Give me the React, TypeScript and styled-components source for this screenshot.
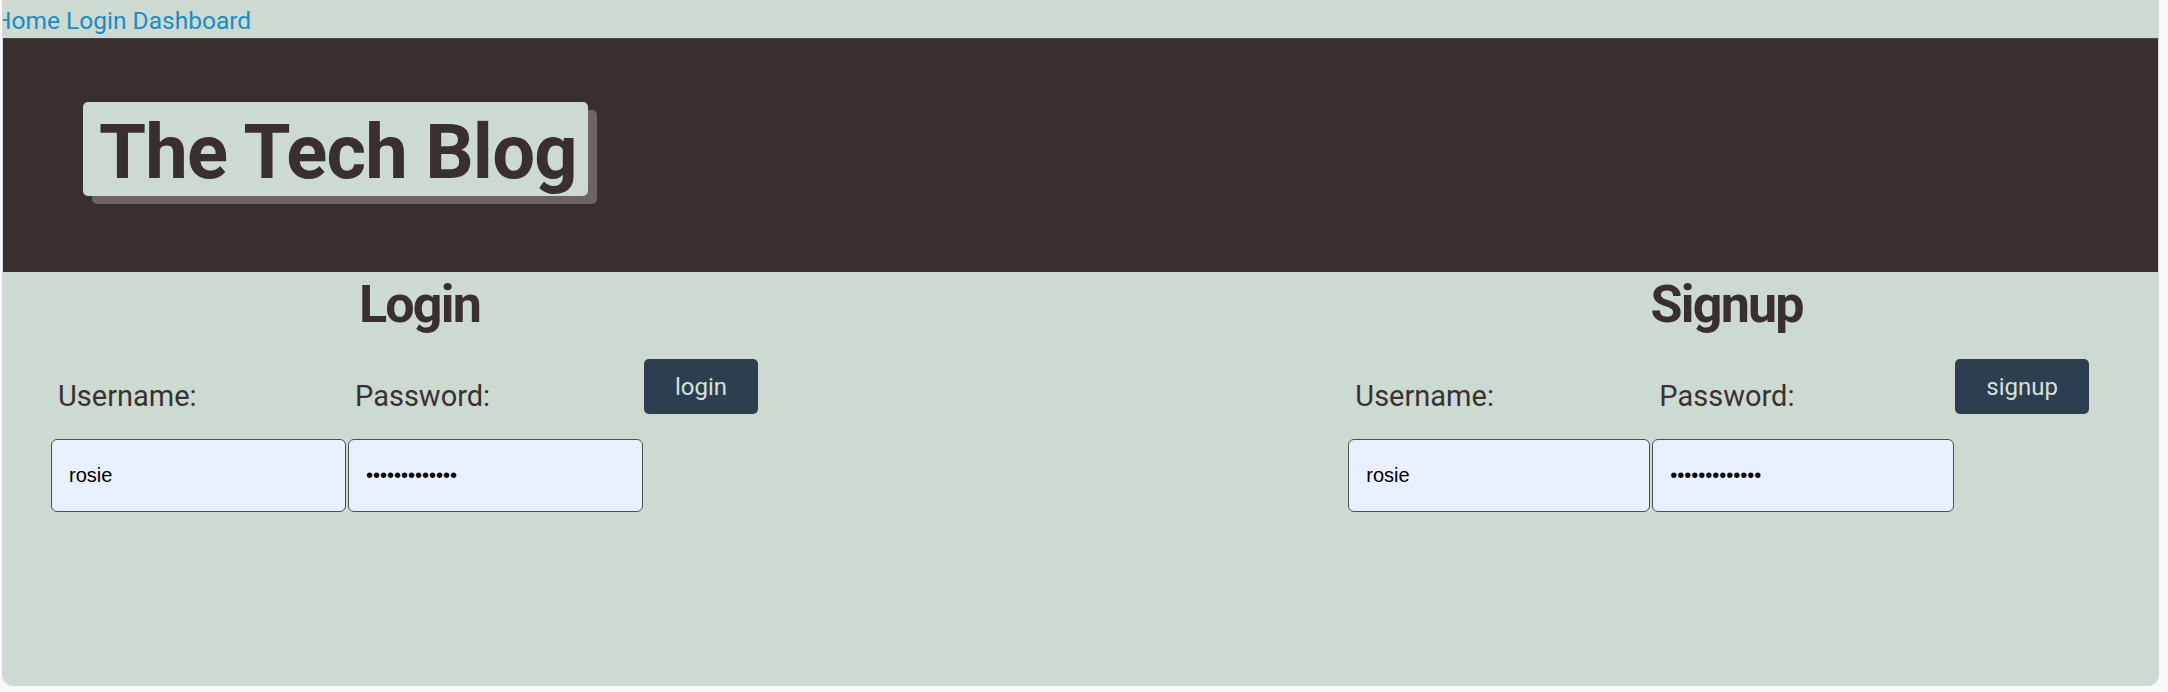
import React from "react";
import styled, { createGlobalStyle } from "styled-components";

const Global = createGlobalStyle`
  html, body { margin: 0; padding: 0; background: #f7f8f9; }
  body { font-family: Roboto, "Liberation Sans", sans-serif; }
  * { box-sizing: border-box; }
`;

const Window = styled.div`
  margin: 0 9px 0 2px;
  height: 686px;
  border: 1px solid #d3d7da;
  border-radius: 0 0 11px 11px;
  background: #ccdad1;
  overflow: hidden;
  display: flex;
  flex-direction: column;
`;

const Nav = styled.nav`
  height: 37px;
  padding-top: 5px;
  margin-left: -9px;
  display: flex;
  gap: 0.25em;
  font-size: 24.5px;
  line-height: normal;
`;

const NavLink = styled.a`
  color: #1a8cc4;
  text-decoration: none;
`;

const Header = styled.header`
  background: #3a2f2f;
  border-top: 1px solid #4a4240;
  padding: 63px 0 76px 80px;
`;

const TitleBox = styled.h1`
  display: inline-block;
  margin: 0;
  padding: 12px 11px 6px 16px;
  background: #ccdad1;
  color: #3a2f2f;
  border-radius: 5px;
  box-shadow: 9px 8px 0 #6d6462;
  font-family: Roboto, "Liberation Sans", sans-serif;
  font-weight: 700;
  font-size: 76px;
  line-height: 1;
  letter-spacing: -0.8px;
`;

const Main = styled.main`
  flex: 1;
  display: flex;
  justify-content: space-between;
  align-items: flex-start;
  padding: 0 69px 0 47px;
`;

const Section = styled.section`
  display: flex;
  flex-direction: column;
`;

const Heading = styled.h2<{ $shift: number }>`
  margin: 2px 0 0;
  padding-left: ${(p) => p.$shift}px;
  text-align: center;
  color: #3a2f2f;
  font-weight: 700;
  font-size: 52px;
  line-height: 1.2;
  letter-spacing: -1.8px;
`;

const Form = styled.form`
  margin-top: 23px;
  display: flex;
  align-items: flex-start;
`;

const Field = styled.div`
  display: flex;
  flex-direction: column;
`;

const Label = styled.label`
  padding: 20px 7px 25px;
  margin: 0 1px;
  color: #3b3131;
  font-size: 29px;
  line-height: 1.2;
`;

const Input = styled.input<{ $w: number }>`
  width: ${(p) => p.$w}px;
  height: 73px;
  margin: 0 1px;
  padding: 0 17px;
  border: 1px solid #4f4f4f;
  border-radius: 6px;
  background: #e8f0fe;
  color: #000;
  font-family: "Liberation Sans", Arial, sans-serif;
  font-size: 20px;
  outline: none;
`;

const Button = styled.button`
  height: 55px;
  padding: 0 31px;
  border: none;
  border-radius: 5px;
  background: #2c3e50;
  color: #d3e1d9;
  font-family: Roboto, "Liberation Sans", sans-serif;
  font-size: 24px;
  cursor: pointer;
`;

type FormProps = {
  title: string;
  action: string;
  width: number;
  shift: number;
};

function AuthForm({ title, action, width, shift }: FormProps) {
  return (
    <Section>
      <Heading $shift={shift}>{title}</Heading>
      <Form onSubmit={(e) => e.preventDefault()}>
        <Field>
          <Label>Username:</Label>
          <Input $w={width} type="text" defaultValue="rosie" />
        </Field>
        <Field>
          <Label>Password:</Label>
          <Input $w={width} type="password" defaultValue="password12345" />
        </Field>
        <Button type="submit">{action}</Button>
      </Form>
    </Section>
  );
}

export default function App() {
  return (
    <>
      <Global />
      <Window>
        <Nav>
          <NavLink href="#">Home</NavLink>
          <NavLink href="#">Login</NavLink>
          <NavLink href="#">Dashboard</NavLink>
        </Nav>
        <Header>
          <TitleBox>The Tech Blog</TitleBox>
        </Header>
        <Main>
          <AuthForm title="Login" action="login" width={295} shift={31} />
          <AuthForm title="Signup" action="signup" width={302} shift={17} />
        </Main>
      </Window>
    </>
  );
}
